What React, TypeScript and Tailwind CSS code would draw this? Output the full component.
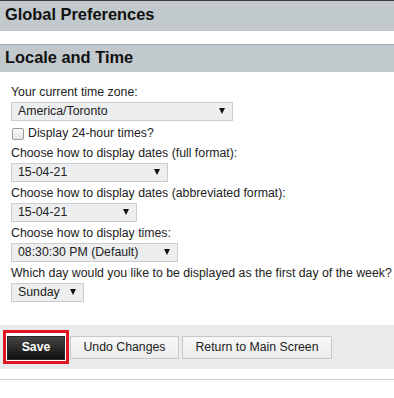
import { useState } from "react";

const Arrow = () => (
  <svg width="6" height="7" viewBox="0 0 6 7" className="shrink-0">
    <polygon points="0,0 6,0 3,6" fill="#111" />
  </svg>
);

const SelectBox = (props: any) => {
  const { value, width } = props;

  return (
    <div
      className="mt-[1px] mb-[2px] flex h-[19px] items-center justify-between border border-[#c9cdce] bg-[#eceeef] pl-[6px] pr-[7px] text-[12.3px] leading-[17px] text-[#222]"
      style={{ width }}
    >
      <span className="whitespace-nowrap">{value}</span>
      <Arrow />
    </div>
  );
};

const Label = ({ children }: any) => (
  <div className="h-[18px] whitespace-nowrap text-[12.3px] leading-[18px] text-[#222]">{children}</div>
);

const App = () => {
  // Variable declarations
  // ------------------------------------------------------

  const [use24, setUse24] = useState(false);

  const fields = [
    { label: "Choose how to display dates (full format):", value: "15-04-21", width: 157 },
    { label: "Choose how to display dates (abbreviated format):", value: "15-04-21", width: 126 },
    { label: "Choose how to display times:", value: "08:30:30 PM (Default)", width: 167 },
    { label: "Which day would you like to be displayed as the first day of the week?", value: "Sunday", width: 73 },
  ];

  // Render
  // ------------------------------------------------------

  return (
    <div className="min-h-[398px] w-full bg-white font-['Liberation_Sans',Arial,sans-serif]">
      <div className="border-t border-[#3e3e3e] bg-[#c1c9cc] pl-[5px] pt-[3px] pb-[7px]">
        <h1 className="text-[16.4px] font-bold leading-[20px] text-[#111]">Global Preferences</h1>
      </div>

      <div className="h-[13px]" />

      <div className="border-t border-[#a2aaad] bg-[#c1c9cc] pl-[5px] pt-[2px] pb-[5px]">
        <h2 className="text-[16.4px] font-bold leading-[20px] text-[#111]">Locale and Time</h2>
      </div>

      <div className="mt-[11px] pl-[11px]">
        <Label>Your current time zone:</Label>
        <SelectBox value="America/Toronto" width={222} />

        <label className="flex h-[21px] items-center gap-[4px] pl-[1px] text-[12.3px] text-[#222]">
          <span
            onClick={() => setUse24(!use24)}
            className="h-[12px] w-[12px] rounded-[2px] border border-[#9a9a9a] bg-gradient-to-b from-[#fcfcfc] to-[#e4e4e4]"
          />
          <span>Display 24-hour times?</span>
        </label>

        {fields.map((f) => (
          <div key={f.label}>
            <Label>{f.label}</Label>
            <SelectBox value={f.value} width={f.width} />
          </div>
        ))}
      </div>

      <div className="mt-[23px] flex h-[44px] items-center bg-[#e9ebec] pl-[3px]">
        <div className="border-[3px] border-[#e3161f] bg-white p-[1px]">
          <button className="h-[24px] w-[58px] border border-[#2a2a2a] bg-gradient-to-b from-[#454545] to-[#111] text-[12.3px] font-bold text-white">
            Save
          </button>
        </div>
        <button className="ml-[1px] h-[23px] w-[109px] border border-[#c8c8c8] bg-gradient-to-b from-[#f8f8f8] to-[#ececec] text-[12.3px] text-[#222]">
          Undo Changes
        </button>
        <button className="ml-[3px] h-[23px] w-[150px] border border-[#c8c8c8] bg-gradient-to-b from-[#f8f8f8] to-[#ececec] text-[12.3px] text-[#222]">
          Return to Main Screen
        </button>
      </div>

      <div className="mt-[10px] border-t border-[#cccccc]" />
    </div>
  );
};

export default App;
